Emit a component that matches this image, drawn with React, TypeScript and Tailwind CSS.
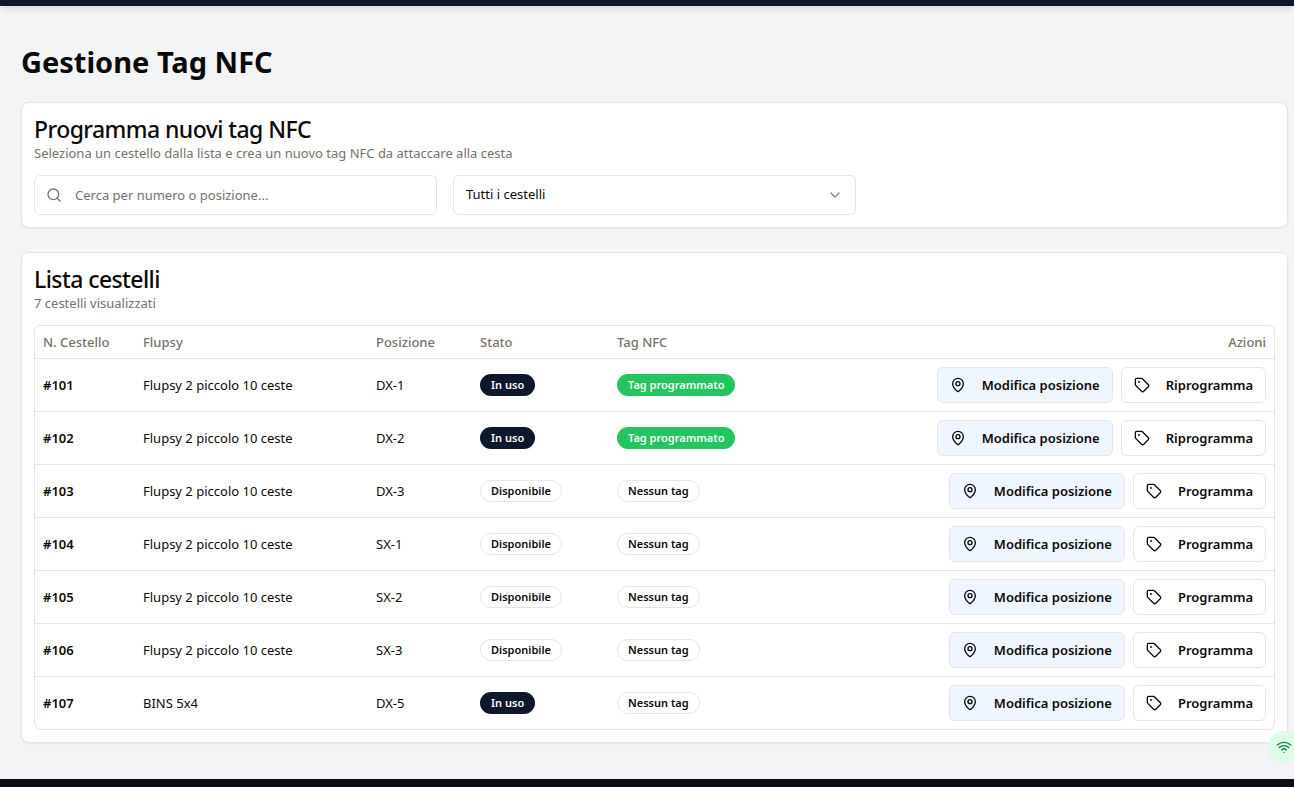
import { useState } from "react";
import { ChevronDown, MapPin, Search, Tag, Wifi } from "lucide-react";

type Basket = {
  number: number;
  flupsy: string;
  position: string;
  inUse: boolean;
  tagged: boolean;
};

const baskets: Basket[] = [
  { number: 101, flupsy: "Flupsy 2 piccolo 10 ceste", position: "DX-1", inUse: true, tagged: true },
  { number: 102, flupsy: "Flupsy 2 piccolo 10 ceste", position: "DX-2", inUse: true, tagged: true },
  { number: 103, flupsy: "Flupsy 2 piccolo 10 ceste", position: "DX-3", inUse: false, tagged: false },
  { number: 104, flupsy: "Flupsy 2 piccolo 10 ceste", position: "SX-1", inUse: false, tagged: false },
  { number: 105, flupsy: "Flupsy 2 piccolo 10 ceste", position: "SX-2", inUse: false, tagged: false },
  { number: 106, flupsy: "Flupsy 2 piccolo 10 ceste", position: "SX-3", inUse: false, tagged: false },
  { number: 107, flupsy: "BINS 5x4", position: "DX-5", inUse: true, tagged: false },
];

const badgeTones = {
  dark: "border-transparent bg-[#0f172a] text-slate-50",
  green: "border-transparent bg-[#22c55e] text-slate-50",
  outline: "border-[#e5e5e5] text-[#0c0a09]",
};

function Badge({ tone, children }: { tone: keyof typeof badgeTones; children: string }) {
  return (
    <span
      className={`inline-flex items-center whitespace-nowrap rounded-full border px-2.5 py-0.5 align-middle text-[11px] leading-4 font-semibold ${badgeTones[tone]}`}
    >
      {children}
    </span>
  );
}

const cardClass = "rounded-lg border border-[#e5e5e5] bg-white p-3 shadow-xs";
const titleClass = "text-[23px] leading-7 font-medium tracking-tight";
const mutedClass = "text-[13px] leading-5 text-[#78716c]";
const buttonClass =
  "inline-flex h-9 items-center gap-4 whitespace-nowrap rounded-md border border-[#e5e5e5] px-3 text-[13px] leading-5 font-semibold";

export default function App() {
  const [query, setQuery] = useState("");

  return (
    <div className="flex min-h-screen flex-col bg-[#f3f4f6] font-['Segoe_UI','Noto_Sans','Open_Sans',sans-serif] text-[#0c0a09]">
      <header className="h-1.5 bg-[#111729] shadow-md" />

      <main className="flex-1 pt-[38px] pr-1.5 pb-9 pl-[21px]">
        <h1 className="mb-[22px] text-[29px] leading-9 font-bold">Gestione Tag NFC</h1>

        <section className={`mb-6 ${cardClass}`}>
          <h2 className={titleClass}>Programma nuovi tag NFC</h2>
          <p className={mutedClass}>Seleziona un cestello dalla lista e crea un nuovo tag NFC da attaccare alla cesta</p>
          <div className="mt-3 grid grid-cols-3 gap-4">
            <div className="relative">
              <Search className="absolute top-3 left-3 size-4 text-[#78716c]" />
              <input
                type="text"
                aria-label="Cerca"
                placeholder="Cerca per numero o posizione..."
                value={query}
                onChange={(e) => setQuery(e.target.value)}
                className="h-10 w-full rounded-md border border-[#e5e5e5] bg-white pr-3 pl-10 text-[13px] placeholder:text-[#78716c]"
              />
            </div>
            <div className="relative">
              <select
                aria-label="Filtro cestelli"
                className="h-10 w-full appearance-none rounded-md border border-[#e5e5e5] bg-white px-3 text-[13px]"
              >
                <option>Tutti i cestelli</option>
              </select>
              <ChevronDown className="pointer-events-none absolute top-3 right-[13px] size-4 opacity-50" />
            </div>
          </div>
        </section>

        <section className={cardClass}>
          <h2 className={titleClass}>Lista cestelli</h2>
          <p className={mutedClass}>7 cestelli visualizzati</p>
          <div className="mt-3 overflow-hidden rounded-md border border-[#e5e5e5]">
            <table className="w-full table-fixed text-left text-[13px] leading-5">
              <thead>
                <tr className="h-8 border-b border-[#e5e5e5] text-[#78716c]">
                  <th className="w-[100px] px-2 font-medium">N. Cestello</th>
                  <th className="w-[233px] px-2 font-medium">Flupsy</th>
                  <th className="w-[104px] px-2 font-medium">Posizione</th>
                  <th className="w-[137px] px-2 font-medium">Stato</th>
                  <th className="w-[160px] px-2 font-medium">Tag NFC</th>
                  <th className="px-2 text-right font-medium">Azioni</th>
                </tr>
              </thead>
              <tbody>
                {baskets.map((b) => (
                  <tr key={b.number} className="border-b border-[#e5e5e5] last:border-b-0">
                    <td className="p-2 font-semibold">#{b.number}</td>
                    <td className="p-2">{b.flupsy}</td>
                    <td className="p-2">{b.position}</td>
                    <td className="p-2">
                      <Badge tone={b.inUse ? "dark" : "outline"}>{b.inUse ? "In uso" : "Disponibile"}</Badge>
                    </td>
                    <td className="p-2">
                      <Badge tone={b.tagged ? "green" : "outline"}>{b.tagged ? "Tag programmato" : "Nessun tag"}</Badge>
                    </td>
                    <td className="p-2">
                      <div className="flex justify-end gap-2">
                        <button type="button" className={`bg-[#eff6ff] ${buttonClass}`}>
                          <MapPin className="size-4" />
                          Modifica posizione
                        </button>
                        <button type="button" className={`bg-white ${buttonClass}`}>
                          <Tag className="size-4" />
                          {b.tagged ? "Riprogramma" : "Programma"}
                        </button>
                      </div>
                    </td>
                  </tr>
                ))}
              </tbody>
            </table>
          </div>
        </section>
      </main>

      <footer className="h-2 bg-[#0c0d15]" />

      <button
        type="button"
        aria-label="Connessione"
        className="fixed -right-1.5 bottom-6 flex size-8 items-center justify-center rounded-full bg-[#dcfce7] text-[#15803d]"
      >
        <Wifi className="size-4" />
      </button>
    </div>
  );
}
